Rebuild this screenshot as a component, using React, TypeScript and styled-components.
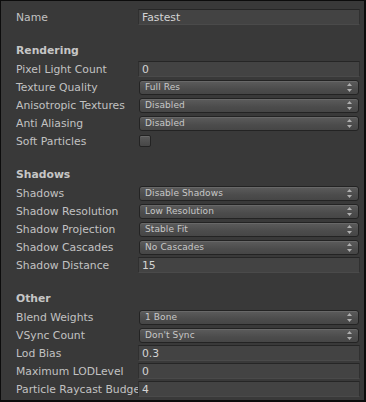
import React from 'react';
import styled, { createGlobalStyle } from 'styled-components';

const GlobalStyle = createGlobalStyle`
  html, body {
    margin: 0;
    padding: 0;
    background: #383838;
  }
`;

const Panel = styled.div`
  width: 366px;
  height: 402px;
  box-sizing: border-box;
  background: #393939;
  border: 1px solid #0c0c0c;
  border-right-width: 2px;
  border-bottom-width: 2px;
  padding: 7px 4px 0 15px;
  display: flex;
  flex-direction: column;
  font-family: 'DejaVu Sans', 'Liberation Sans', sans-serif;
  color: #c4c4c4;
  overflow: hidden;
`;

const Row = styled.div`
  display: grid;
  grid-template-columns: 122px 1fr;
  align-items: center;
  height: 18px;
`;

const Label = styled.span`
  font-size: 10.8px;
  white-space: nowrap;
  color: #c2c2c2;
`;

const Header = styled.div`
  margin-top: 14px;
  height: 20px;
  display: flex;
  align-items: center;
  font-size: 10.8px;
  font-weight: bold;
  color: #c6c6c6;
`;

const TextField = styled.div`
  position: relative;
  height: 16px;
  box-sizing: border-box;
  background: #434343;
  border: 1px solid #303030;
  border-top-color: #262626;
  border-bottom-color: #4a4a4a;
  padding-left: 3px;
  display: flex;
  align-items: center;
  font-size: 10.8px;
  color: #d4d4d4;
`;

const Popup = styled.div`
  position: relative;
  height: 15px;
  margin: 0 1px;
  box-sizing: border-box;
  border: 1px solid #232323;
  border-radius: 3px;
  background: linear-gradient(#5c5c5c, #4c4c4c 60%, #464646);
  box-shadow: inset 0 1px 0 #686868;
  padding: 0 6px 0 5px;
  display: flex;
  align-items: center;
  justify-content: space-between;
  font-size: 9px;
  letter-spacing: 0.1px;
  color: #c8c8c8;
`;

const Checkbox = styled.div`
  width: 12px;
  height: 12px;
  margin-left: 1px;
  box-sizing: border-box;
  border: 1px solid #232323;
  border-radius: 2px;
  background: linear-gradient(#5a5a5a, #474747);
  box-shadow: inset 0 1px 0 #686868;
`;

const Arrows = () => (
  <svg width="5" height="9" viewBox="0 0 5 9">
    <path d="M2.5 0 L5 3 L0 3 Z" fill="#b0b0b0" />
    <path d="M2.5 9 L5 6 L0 6 Z" fill="#b0b0b0" />
  </svg>
);

type Field =
  | { label: string; kind: 'text'; value: string }
  | { label: string; kind: 'popup'; value: string }
  | { label: string; kind: 'check' };

const sections: { title: string; fields: Field[] }[] = [
  {
    title: 'Rendering',
    fields: [
      { label: 'Pixel Light Count', kind: 'text', value: '0' },
      { label: 'Texture Quality', kind: 'popup', value: 'Full Res' },
      { label: 'Anisotropic Textures', kind: 'popup', value: 'Disabled' },
      { label: 'Anti Aliasing', kind: 'popup', value: 'Disabled' },
      { label: 'Soft Particles', kind: 'check' },
    ],
  },
  {
    title: 'Shadows',
    fields: [
      { label: 'Shadows', kind: 'popup', value: 'Disable Shadows' },
      { label: 'Shadow Resolution', kind: 'popup', value: 'Low Resolution' },
      { label: 'Shadow Projection', kind: 'popup', value: 'Stable Fit' },
      { label: 'Shadow Cascades', kind: 'popup', value: 'No Cascades' },
      { label: 'Shadow Distance', kind: 'text', value: '15' },
    ],
  },
  {
    title: 'Other',
    fields: [
      { label: 'Blend Weights', kind: 'popup', value: '1 Bone' },
      { label: 'VSync Count', kind: 'popup', value: "Don't Sync" },
      { label: 'Lod Bias', kind: 'text', value: '0.3' },
      { label: 'Maximum LODLevel', kind: 'text', value: '0' },
      { label: 'Particle Raycast Budget', kind: 'text', value: '4' },
    ],
  },
];

const FieldRow: React.FC<{ field: Field }> = ({ field }) => (
  <Row>
    <Label>{field.label}</Label>
    {field.kind === 'text' && <TextField>{field.value}</TextField>}
    {field.kind === 'popup' && (
      <Popup>
        <span>{field.value}</span>
        <Arrows />
      </Popup>
    )}
    {field.kind === 'check' && <Checkbox />}
  </Row>
);

const App: React.FC = () => {
  return (
    <>
      <GlobalStyle />
      <Panel>
        <FieldRow field={{ label: 'Name', kind: 'text', value: 'Fastest' }} />
        {sections.map((s) => (
          <React.Fragment key={s.title}>
            <Header>{s.title}</Header>
            {s.fields.map((f) => (
              <FieldRow key={f.label} field={f} />
            ))}
          </React.Fragment>
        ))}
      </Panel>
    </>
  );
};

export default App;
